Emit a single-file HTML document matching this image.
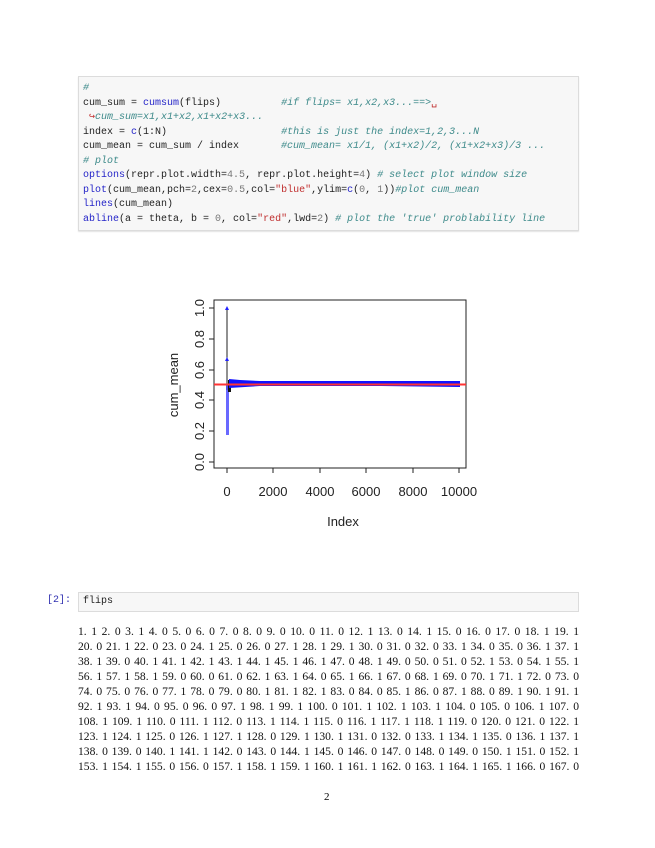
<!DOCTYPE html>
<html><head><meta charset="utf-8"><style>
body{margin:0;width:655px;height:848px;background:#fff;position:relative;overflow:hidden}
.code{position:absolute;left:78px;top:76px;width:501px;height:155px;background:#f7f7f7;border:1px solid #dcdcdc;box-sizing:border-box;box-shadow:0 1px 1px #e4e4e4}
.code pre{margin:0;position:absolute;left:4px;top:5px;font:10px/14.5px "Liberation Mono",monospace;color:#222}
.c{color:#3d8a8a;font-style:italic}.b{color:#2424c8}.r{color:#c03030}.n{color:#777}
.in{position:absolute;left:78px;top:592px;width:501px;height:20px;background:#f7f7f7;border:1px solid #dcdcdc;box-sizing:border-box}
.in span{position:absolute;left:4px;top:3px;font:10px "Liberation Mono",monospace;color:#222}
.lbl{position:absolute;left:47px;top:595px;font:10px "Liberation Mono",monospace;color:#3030b0}
.out{position:absolute;left:78px;top:624px;width:501px;font:11.6px/15px "Liberation Serif",serif;color:#111}
.out div{text-align:justify;text-align-last:justify;white-space:nowrap;overflow:visible}
.pg{position:absolute;left:324px;top:791px;font:11px "Liberation Serif",serif}
</style></head><body>
<div class="code"><pre><span class="c">#</span>
cum_sum = <span class="b">cumsum</span>(flips)          <span class="c">#if flips= x1,x2,x3...==></span><span class="r">␣</span>
 <span class="r">↪</span><span class="c">cum_sum=x1,x1+x2,x1+x2+x3...</span>
index = <span class="b">c</span>(1:N)                   <span class="c">#this is just the index=1,2,3...N</span>
cum_mean = cum_sum / index       <span class="c">#cum_mean= x1/1, (x1+x2)/2, (x1+x2+x3)/3 ...</span>
<span class="c"># plot</span>
<span class="b">options</span>(repr.plot.width=<span class="n">4.5</span>, repr.plot.height=<span class="n">4</span>) <span class="c"># select plot window size</span>
<span class="b">plot</span>(cum_mean,pch=<span class="n">2</span>,cex=<span class="n">0.5</span>,col=<span class="r">"blue"</span>,ylim=<span class="b">c</span>(<span class="n">0</span>, <span class="n">1</span>))<span class="c">#plot cum_mean</span>
<span class="b">lines</span>(cum_mean)
<span class="b">abline</span>(a = theta, b = <span class="n">0</span>, col=<span class="r">"red"</span>,lwd=<span class="n">2</span>) <span class="c"># plot the 'true' problability line</span></pre></div>

<svg style="position:absolute;left:0;top:0" width="655" height="848" font-family="Liberation Sans, sans-serif" font-size="13" fill="#222">
<rect x="214" y="300" width="252" height="168" fill="none" stroke="#222" stroke-width="1"/>
<g stroke="#222">
<line x1="214" y1="308" x2="209" y2="308"/><line x1="214" y1="339" x2="209" y2="339"/><line x1="214" y1="370" x2="209" y2="370"/><line x1="214" y1="400" x2="209" y2="400"/><line x1="214" y1="431" x2="209" y2="431"/><line x1="214" y1="462" x2="209" y2="462"/>
<line x1="227" y1="468" x2="227" y2="473"/><line x1="273" y1="468" x2="273" y2="473"/><line x1="320" y1="468" x2="320" y2="473"/><line x1="366" y1="468" x2="366" y2="473"/><line x1="413" y1="468" x2="413" y2="473"/><line x1="459" y1="468" x2="459" y2="473"/>
</g>
<g text-anchor="middle">
<text transform="translate(204,308) rotate(-90)">1.0</text>
<text transform="translate(204,339) rotate(-90)">0.8</text>
<text transform="translate(204,370) rotate(-90)">0.6</text>
<text transform="translate(204,400) rotate(-90)">0.4</text>
<text transform="translate(204,431) rotate(-90)">0.2</text>
<text transform="translate(204,462) rotate(-90)">0.0</text>
<text transform="translate(178,385) rotate(-90)">cum_mean</text>
<text x="227" y="496">0</text><text x="273" y="496">2000</text><text x="320" y="496">4000</text><text x="366" y="496">6000</text><text x="413" y="496">8000</text><text x="459" y="496">10000</text>
<text x="343" y="526">Index</text>
</g>
<line x1="227" y1="308" x2="227" y2="390" stroke="#222" stroke-width="1"/>
<polygon points="227,306 229,310 225,310" fill="#22f"/>
<polygon points="227,357 229,361 225,361" fill="#22f"/>
<rect x="226" y="385" width="3" height="50" fill="#44f" opacity="0.8"/>
<rect x="228" y="380" width="3" height="12" fill="#111"/>
<polygon points="229,379 240,380 260,381 290,381 340,381 460,381 460,387 380,386 300,386 260,386 229,388" fill="#11f"/>
<line x1="214" y1="384.5" x2="466" y2="384.5" stroke="#f33" stroke-width="2"/>
</svg>

<div class="lbl">[2]:</div>
<div class="in"><span>flips</span></div>
<div class="out">
<div>1. 1 2. 0 3. 1 4. 0 5. 0 6. 0 7. 0 8. 0 9. 0 10. 0 11. 0 12. 1 13. 0 14. 1 15. 0 16. 0 17. 0 18. 1 19. 1</div>
<div>20. 0 21. 1 22. 0 23. 0 24. 1 25. 0 26. 0 27. 1 28. 1 29. 1 30. 0 31. 0 32. 0 33. 1 34. 0 35. 0 36. 1 37. 1</div>
<div>38. 1 39. 0 40. 1 41. 1 42. 1 43. 1 44. 1 45. 1 46. 1 47. 0 48. 1 49. 0 50. 0 51. 0 52. 1 53. 0 54. 1 55. 1</div>
<div>56. 1 57. 1 58. 1 59. 0 60. 0 61. 0 62. 1 63. 1 64. 0 65. 1 66. 1 67. 0 68. 1 69. 0 70. 1 71. 1 72. 0 73. 0</div>
<div>74. 0 75. 0 76. 0 77. 1 78. 0 79. 0 80. 1 81. 1 82. 1 83. 0 84. 0 85. 1 86. 0 87. 1 88. 0 89. 1 90. 1 91. 1</div>
<div>92. 1 93. 1 94. 0 95. 0 96. 0 97. 1 98. 1 99. 1 100. 0 101. 1 102. 1 103. 1 104. 0 105. 0 106. 1 107. 0</div>
<div>108. 1 109. 1 110. 0 111. 1 112. 0 113. 1 114. 1 115. 0 116. 1 117. 1 118. 1 119. 0 120. 0 121. 0 122. 1</div>
<div>123. 1 124. 1 125. 0 126. 1 127. 1 128. 0 129. 1 130. 1 131. 0 132. 0 133. 1 134. 1 135. 0 136. 1 137. 1</div>
<div>138. 0 139. 0 140. 1 141. 1 142. 0 143. 0 144. 1 145. 0 146. 0 147. 0 148. 0 149. 0 150. 1 151. 0 152. 1</div>
<div>153. 1 154. 1 155. 0 156. 0 157. 1 158. 1 159. 1 160. 1 161. 1 162. 0 163. 1 164. 1 165. 1 166. 0 167. 0</div>
</div>
<div class="pg">2</div>
</body></html>
